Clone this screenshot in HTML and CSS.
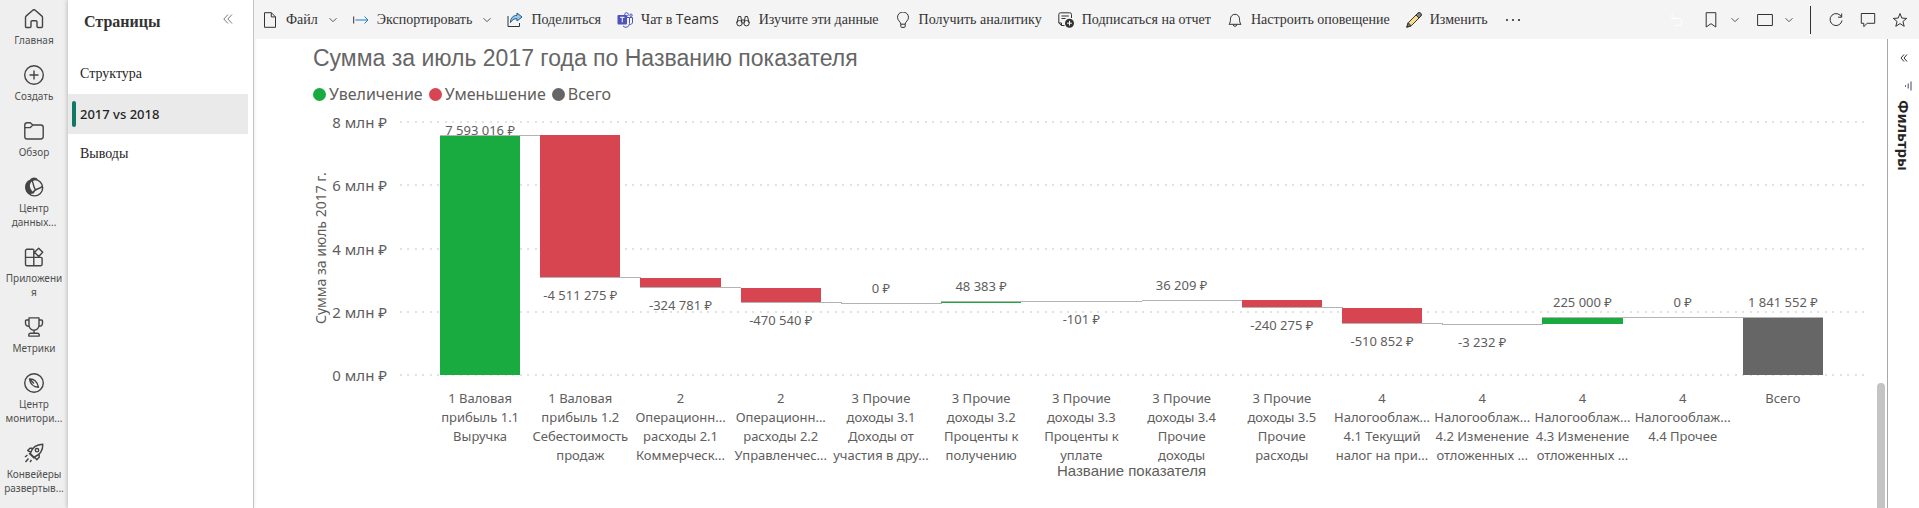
FILE: index.html
```html
<!DOCTYPE html>
<html lang="ru">
<head>
<meta charset="utf-8">
<title>Сумма за июль 2017 года</title>
<link rel="stylesheet" href="styles.css">
</head>
<body class="app">
<nav class="rail" aria-label="Навигация">
  <a class="rail-item" href="#"><svg class="rail-icon" viewBox="0 0 20 20"><path d="M1.5 8.6c0-.7.3-1.300.8-1.700L8.800 1.200a1.800 1.800 0 0 1 2.400 0l6.500 5.700c.5.4.8 1 .8 1.700v8.900a1 1 0 0 1-1 1h-3.500a1 1 0 0 1-1-1V13a1.200 1.200 0 0 0-1.200-1.200H8.200A1.200 1.200 0 0 0 7 13v4.500a1 1 0 0 1-1 1H2.500a1 1 0 0 1-1-1z"/></svg><span class="rail-label">Главная</span></a>
  <a class="rail-item" href="#"><svg class="rail-icon" viewBox="0 0 20 20"><circle cx="10" cy="10" r="9.300"/><path d="M10 5.500v9M5.500 10h9"/></svg><span class="rail-label">Создать</span></a>
  <a class="rail-item" href="#"><svg class="rail-icon" viewBox="0 0 20 20"><path d="M.8 4A2.300 2.300 0 0 1 3.100 1.800h3.200L8.800 4h8.100A2.300 2.300 0 0 1 19.200 6.300v9.400A2.300 2.300 0 0 1 16.900 18H3.100A2.300 2.300 0 0 1 .8 15.700zM.8 6.600h5.500L8.800 4"/></svg><span class="rail-label">Обзор</span></a>
  <a class="rail-item" href="#"><svg class="rail-icon" viewBox="0 0 20 20"><circle cx="10.500" cy="10.700" r="8.200"/><path class="solid" d="M2.800 15.500C-.5 10.500 1 4.500 6 2.800 8-.3 12.500-.2 14 2.800 11.500 2.600 9.500 3.200 8.200 4.300 6.500 5.500 5.500 7.800 6 10c.5 2.500 2.200 4.300 4.500 6-3.500 1.500-6 1.500-7.700-.5z"/><path d="M8 3.500c1.500 2.500 1 5.500 3.500 9.500M18.500 9c-3 4-7.500 1.500-9.500 7"/></svg><span class="rail-label">Центр<br>данных...</span></a>
  <a class="rail-item" href="#"><svg class="rail-icon" viewBox="0 0 20 20"><path d="M9.500 2.200H3A1.500 1.500 0 0 0 1.500 3.700v13.600A1.500 1.500 0 0 0 3 18.800h13.600a1.500 1.500 0 0 0 1.500-1.500v-5.800a1.100 1.100 0 0 0-1.100-1.100H1.500M9.800 2.200v16.600M14.700 1.300l4 4-4 4.200-4.200-4.200z"/></svg><span class="rail-label">Приложени<br>я</span></a>
  <a class="rail-item" href="#"><svg class="rail-icon" viewBox="0 0 20 20"><path d="M5 .9h10v7.300a5 5 0 0 1-10 0zM5 3H2.500a1 1 0 0 0-1 1v2A3.500 3.500 0 0 0 5 9.400M15 3h2.500a1 1 0 0 1 1 1v2A3.500 3.500 0 0 1 15 9.400M10 13.200v3M4.800 19.100v-1.300a1.600 1.600 0 0 1 1.600-1.600h7.200a1.600 1.600 0 0 1 1.600 1.600v1.300z"/></svg><span class="rail-label">Метрики</span></a>
  <a class="rail-item" href="#"><svg class="rail-icon" viewBox="0 0 20 20"><circle cx="10" cy="10" r="9.300"/><path d="M5.500 6c4-.5 8 2.500 9 8.300-5-.3-8.300-3.800-9-8.300zM5.500 6l4.500 4.500"/></svg><span class="rail-label">Центр<br>монитори...</span></a>
  <a class="rail-item" href="#"><svg class="rail-icon" viewBox="0 0 20 20"><path d="M6.300 10.500C8 5 12 1.500 18.800 1.300 19 7.500 15.500 12 10 14.200zM8.500 5.200H6L3.700 7.600l3 1.500M15.200 11.500v2.800l-2.400 2.500-2-2.700M5 10.200l5.500 5.300M1 14l2.500-2M1.500 19l3-3.500M6 19l1.500-2"/><circle cx="13" cy="7.200" r="1.700"/></svg><span class="rail-label">Конвейеры<br>развертыв...</span></a>
</nav>

<aside class="pages">
  <header class="pages-head">
    <h2 class="pages-title">Страницы</h2>
    <button class="plain" aria-label="Свернуть"><svg class="collapse" viewBox="0 0 10 10"><path d="M5 .5.800 5 5 9.500M9 .5 4.800 5 9 9.500"/></svg></button>
  </header>
  <a class="page-link" href="#">Структура</a>
  <a class="page-link active" href="#">2017 vs 2018</a>
  <a class="page-link" href="#">Выводы</a>
</aside>

<main class="main">
  <div class="toolbar">
    <button class="tool"><svg class="icon" viewBox="0 0 16 16"><path d="M2.500.7h6.800l4.200 4.200v10.400h-11zM9.300.7v4.200h4.200"/></svg>Файл<svg class="chevron" viewBox="0 0 8 8"><path d="m.5 2.200 3.500 3.500 3.500-3.500"/></svg></button>
    <button class="tool"><svg class="icon" viewBox="0 0 16 16"><path d="M.7 4.500v7"/><path class="blue" d="M2.500 8h12.500M11.500 4.500 15 8l-3.500 3.500"/></svg>Экспортировать<svg class="chevron" viewBox="0 0 8 8"><path d="m.5 2.200 3.500 3.500 3.500-3.500"/></svg></button>
    <button class="tool"><svg class="icon" viewBox="0 0 16 16"><path d="M1 4v10.500h11.500V11"/><path d="M10 1l5 4-5 4V6.700C7 6.500 5 8 3.500 10.500 3.500 6 6 3.500 10 3.300z" fill="#8ec9f5" stroke="#24567e"/></svg>Поделиться</button>
    <button class="tool"><svg class="icon" viewBox="0 0 16 16"><circle cx="9.500" cy="2.500" r="1.800" stroke="#4b53bc"/><circle cx="14" cy="3.200" r="1.200" stroke="#4b53bc"/><path d="M8 5.500h4.500v6a3.700 3.700 0 0 1-6.500 2.500M12.500 5.500h3v4.500a2.500 2.500 0 0 1-3 2.500" stroke="#4b53bc"/><rect x=".5" y="3" width="9.500" height="9.500" rx="1" fill="#4b53bc" stroke="none"/><path d="M3 5.300h4.500M5.250 5.300v5" stroke="#fff"/></svg><span>Чат в <span class="latin">Teams</span></span></button>
    <button class="tool"><svg class="icon" viewBox="0 0 16 16"><circle cx="4.500" cy="11.200" r="2.700"/><circle cx="11.500" cy="11.200" r="2.700"/><path d="M1.800 11 3.500 4.500h2.300l1.200 7M14.200 11l-1.700-6.500h-2.300L9 11.500M7 8h2"/></svg>Изучите эти данные</button>
    <button class="tool"><svg class="icon" viewBox="0 0 16 16"><path d="M5.800 12.200c0-2.500-3.300-3.500-3.300-6.900a5.500 5.300 0 0 1 11 0c0 3.400-3.300 4.400-3.300 6.900zM5.800 12.200v2.200a1 1 0 0 0 1 1h2.400a1 1 0 0 0 1-1v-2.200"/></svg>Получить аналитику</button>
    <button class="tool"><svg class="icon" viewBox="0 0 16 16"><path d="M6.500 13.500h-3L.8 11V2.500A1.700 1.700 0 0 1 2.500.8h9.300a1.700 1.700 0 0 1 1.700 1.700V6M.8 11h2.700v2.500M3.500 4h7.300M3.500 6.500h4"/><circle cx="11.500" cy="11.200" r="4.500" fill="#333" stroke="none"/><path d="M11.500 8.800v4.800M9.100 11.200h4.800" stroke="#fff"/></svg>Подписаться на отчет</button>
    <button class="tool"><svg class="icon" viewBox="0 0 16 16"><path d="M2 12.300h12c-1.200-1.500-1.500-3-1.500-5.500a4.500 4.500 0 0 0-9 0c0 2.500-.3 4-1.500 5.500zM6.200 12.500a1.800 1.800 0 0 0 3.600 0"/></svg>Настроить оповещение</button>
    <button class="tool"><svg class="icon" viewBox="0 0 16 16"><path d="M.8 15.200 2.200 10.800 11.700 1.300a2.100 2.100 0 0 1 3 3L5.200 13.800z" fill="#f7dc8c"/><path d="M10 3l3 3 1.700-1.700a2.100 2.100 0 0 0-3-3z" fill="#8a8080"/><path d="M2.200 10.800l3 3-4.400 1.400z" fill="#777"/></svg>Изменить</button>
    <button class="tool" aria-label="Ещё"><svg class="icon" viewBox="0 0 16 16"><g fill="#333" stroke="none"><circle cx="3" cy="8" r="1.100"/><circle cx="9" cy="8" r="1.100"/><circle cx="15" cy="8" r="1.100"/></g></svg></button>
    <span class="spacer"></span>
    <div class="tools-right">
      <button class="tool faint" aria-label="Сброс" disabled><svg class="icon" viewBox="0 0 16 16"><path d="M3 2v4.500h4.500M3.300 6.300h6.200a3.500 3.500 0 0 1 0 7.200H6"/></svg></button>
      <button class="tool" aria-label="Закладки"><svg class="icon" viewBox="0 0 16 16"><path d="M3.200.7h9.600v14.300L8 11.700 3.200 15z"/></svg><svg class="chevron" viewBox="0 0 8 8"><path d="m.5 2.200 3.500 3.500 3.500-3.500"/></svg></button>
      <button class="tool" aria-label="Вид"><svg class="icon" viewBox="0 0 16 16"><path d="M.6 2.500h14.800v11H.6z"/></svg><svg class="chevron" viewBox="0 0 8 8"><path d="m.5 2.200 3.500 3.500 3.500-3.500"/></svg></button>
    </div>
    <div class="tools-end">
      <button class="tool" aria-label="Обновить"><svg class="icon" viewBox="0 0 16 16"><path d="M13.500 5A6 6 0 1 0 14 8.500M13.700 1.500v3.700H10"/></svg></button>
      <button class="tool" aria-label="Комментарии"><svg class="icon" viewBox="0 0 16 16"><path d="M1.300 1.500h13.400v9.800H7.200L3.800 14.600v-3.300H1.300z"/></svg></button>
      <button class="tool" aria-label="В избранное"><svg class="icon" viewBox="0 0 16 16"><path d="m8 1.500 1.800 4.600 4.900.3-3.800 3.100 1.300 4.800L8 11.600l-4.200 2.700 1.300-4.800-3.800-3.100 4.900-.3z"/></svg></button>
    </div>
  </div>

  <div class="work">
    <section class="visual">
      <h1 class="visual-title">Сумма за июль 2017 года по Названию показателя</h1>
      <ul class="legend">
        <li class="legend-item up">Увеличение</li>
        <li class="legend-item down">Уменьшение</li>
        <li class="legend-item total">Всего</li>
      </ul>
      <div class="chart">
        <div class="y-title">Сумма за июль 2017 г.</div>
        <div class="ticks"><span>8 млн ₽</span><span>6 млн ₽</span><span>4 млн ₽</span><span>2 млн ₽</span><span>0 млн ₽</span></div>
        <div class="plot">
          <div class="gridlines"><i></i><i></i><i></i><i></i><i></i></div>
          <div class="columns bars">
            <div class="col"><div class="bar up clamp" style="margin-top:12.9px;height:94.91%"><span>7 593 016 ₽</span></div></div>
            <div class="col"><div class="bar down" style="margin-top:12.9px;height:56.39%"><span>-4 511 275 ₽</span></div></div>
            <div class="col"><div class="bar down" style="margin-top:155.5px;height:4.06%"><span>-324 781 ₽</span></div></div>
            <div class="col"><div class="bar down" style="margin-top:165.8px;height:5.88%"><span>-470 540 ₽</span></div></div>
            <div class="col"><div class="bar up" style="margin-top:180.7px;height:0"><span>0 ₽</span></div></div>
            <div class="col"><div class="bar up" style="margin-top:179.2px;height:0.61%"><span>48 383 ₽</span></div></div>
            <div class="col"><div class="bar down" style="margin-top:179.2px;height:0"><span>-101 ₽</span></div></div>
            <div class="col"><div class="bar up" style="margin-top:178px;height:0.45%"><span>36 209 ₽</span></div></div>
            <div class="col"><div class="bar down" style="margin-top:178px;height:3%"><span>-240 275 ₽</span></div></div>
            <div class="col"><div class="bar down" style="margin-top:185.6px;height:6.39%"><span>-510 852 ₽</span></div></div>
            <div class="col"><div class="bar down" style="margin-top:201.8px;height:0.04%"><span>-3 232 ₽</span></div></div>
            <div class="col"><div class="bar up" style="margin-top:194.8px;height:2.81%"><span>225 000 ₽</span></div></div>
            <div class="col"><div class="bar up" style="margin-top:194.8px;height:0"><span>0 ₽</span></div></div>
            <div class="col"><div class="bar total" style="margin-top:194.8px;height:23.02%"><span>1 841 552 ₽</span></div></div>
          </div>
        </div>
        <div class="x-axis">
          <div class="columns labels">
            <div>1 Валовая<br>прибыль 1.1<br>Выручка</div>
            <div>1 Валовая<br>прибыль 1.2<br>Себестоимость<br>продаж</div>
            <div>2<br>Операционн...<br>расходы 2.1<br>Коммерческ...</div>
            <div>2<br>Операционн...<br>расходы 2.2<br>Управленчес...</div>
            <div>3 Прочие<br>доходы 3.1<br>Доходы от<br>участия в дру...</div>
            <div>3 Прочие<br>доходы 3.2<br>Проценты к<br>получению</div>
            <div>3 Прочие<br>доходы 3.3<br>Проценты к<br>уплате</div>
            <div>3 Прочие<br>доходы 3.4<br>Прочие<br>доходы</div>
            <div>3 Прочие<br>доходы 3.5<br>Прочие<br>расходы</div>
            <div>4<br>Налогооблаж...<br>4.1 Текущий<br>налог на при...</div>
            <div>4<br>Налогооблаж...<br>4.2 Изменение<br>отложенных ...</div>
            <div>4<br>Налогооблаж...<br>4.3 Изменение<br>отложенных ...</div>
            <div>4<br>Налогооблаж...<br>4.4 Прочее</div>
            <div>Всего</div>
          </div>
          <div class="x-title">Название показателя</div>
        </div>
      </div>
    </section>
    <div class="scroll"><div class="thumb"></div></div>
    <aside class="filters">
      <button class="plain" aria-label="Развернуть"><svg class="expand" viewBox="0 0 8 8"><path d="M4 .5 1 4l3 3.500M7 .5 4 4l3 3.500"/></svg></button>
      <svg class="filter-icon" viewBox="0 0 8 10"><path d="M7 .5v9M4.200 2.500v5M1.500 4.200v1.600"/></svg>
      <h2 class="filters-title">Фильтры</h2>
    </aside>
  </div>
</main>
</body>
</html>
```

FILE: styles.css
```css
* { box-sizing: border-box; }

.app {
  margin: 0;
  min-height: 100vh;
  display: flex;
  background: #fff;
  color: #333;
  font-family: "Noto Sans", "Open Sans", sans-serif;
}

svg { display: block; flex: none; fill: none; stroke: #333; }

.plain { padding: 0; border: 0; background: none; }

/* Left navigation rail */
.rail {
  flex: none;
  width: 68px;
  padding-top: 9px;
  display: flex;
  flex-direction: column;
  gap: 17px;
  background: #efefef;
}
.rail-item {
  display: flex;
  flex-direction: column;
  align-items: center;
  gap: 4px;
  padding-bottom: 1px;
  color: #505050;
  text-decoration: none;
}
.rail-icon { width: 20px; height: 20px; stroke: #444; stroke-width: 1.4; stroke-linejoin: round; }
.rail-icon .solid { fill: #444; stroke: none; }
.rail-label { font-size: 10px; line-height: 14px; text-align: center; white-space: nowrap; }

/* Report pages */
.pages {
  flex: none;
  width: 186px;
  padding-right: 5px;
  border-right: 1px solid #c4c4c4;
  box-shadow: -1px 0 4px rgba(0, 0, 0, .2);
}
.pages-head {
  height: 54px;
  padding: 12px 15px 0 16px;
  display: flex;
  justify-content: space-between;
  align-items: flex-start;
}
.pages-title { margin: 0; font: bold 16px/20px "Liberation Serif", serif; }
.collapse { width: 10px; height: 10px; margin-top: 2px; stroke: #777; }
.page-link {
  height: 40px;
  padding-left: 4px;
  display: flex;
  align-items: center;
  gap: 4px;
  color: #252423;
  font: 14px/20px "Liberation Serif", serif;
  text-decoration: none;
}
.page-link::before { content: ""; width: 4px; height: 26px; border-radius: 2px; }
.page-link.active { background: #eaeaea; font: 500 13px/20px "Noto Sans", sans-serif; }
.page-link.active::before { background: #117865; }

/* Toolbar */
.main { flex: 1; min-width: 0; display: flex; flex-direction: column; }
.toolbar { height: 39px; display: flex; align-items: center; background: #f4f4f4; }
.tool {
  padding: 0 8px;
  display: flex;
  align-items: center;
  gap: 8px;
  border: 0;
  background: none;
  color: #333;
  font: 14px/20px "Liberation Serif", serif;
  white-space: nowrap;
}
.latin { font: 14px/20px "Open Sans", sans-serif; }
.icon { width: 16px; height: 16px; }
.icon .blue { stroke: #1a7fc4; }
.chevron { width: 8px; height: 8px; margin-left: 3px; stroke: #555; }
.faint svg { stroke: #fff; }
.spacer { flex: 1; }
.tools-right { display: flex; gap: 2px; padding-right: 9px; }
.tools-right .tool { gap: 9px; }
.tools-end { height: 28px; display: flex; padding: 0 3px 0 9px; border-left: 1px solid #333; }

/* Report visual */
.work { flex: 1; display: flex; }
.visual { flex: 1; min-width: 0; padding: 7px 10px 16px 59px; color: #605e5c; }
.visual-title { margin: 0; font: 23px/24px "Liberation Sans", sans-serif; color: #666; }
.legend {
  margin: 12px 0 16px;
  padding: 0;
  display: flex;
  gap: 6px;
  list-style: none;
  font-size: 16px;
  line-height: 24px;
}
.legend-item { display: flex; align-items: center; gap: 3px; }
.legend-item::before { content: ""; width: 13px; height: 13px; border-radius: 50%; background: var(--tone); }
.up { --tone: #1aab40; }
.down { --tone: #d64550; }
.total { --tone: #666; }

.chart { display: grid; grid-template-columns: 16px 59px 1fr; column-gap: 6px; }
.y-title {
  writing-mode: vertical-rl;
  transform: rotate(180deg);
  text-align: center;
  font-size: 14px;
  line-height: 16px;
}
.ticks {
  margin: -10px 0;
  padding-right: 7px;
  display: flex;
  flex-direction: column;
  justify-content: space-between;
  align-items: flex-end;
  font-size: 15px;
  line-height: 20px;
  white-space: nowrap;
}
.plot { position: relative; height: 253px; }
.gridlines {
  position: absolute;
  inset: -1px 0;
  display: flex;
  flex-direction: column;
  justify-content: space-between;
}
.gridlines i {
  height: 2px;
  background: linear-gradient(to right, #e2e2e2 2px, transparent 2px 7px, #e2e2e2 7px 9px, transparent 9px) 0 0 / 15px 2px;
}
.columns { padding: 0 34px 0 30px; display: grid; grid-template-columns: repeat(14, 1fr); }
.bars { position: relative; height: 100%; }
.col { height: 253px; padding: 0 10%; }
.bar {
  position: relative;
  min-height: 1px;
  background: var(--tone);
  border-top: 1px solid #b3b3b3;
}
.bar.down { border-top-width: 0; border-bottom: 1px solid #b3b3b3; }
.bar::after {
  content: "";
  position: absolute;
  left: 100%;
  top: -1px;
  width: 26%;
  height: 1px;
  background: #b3b3b3;
}
.bar.down::after { top: auto; bottom: -1px; }
.bar.total::after { content: none; }
.bar span {
  position: absolute;
  left: 50%;
  bottom: 100%;
  margin-bottom: 7px;
  transform: translateX(-50%);
  font-size: 13px;
  line-height: 18px;
  white-space: nowrap;
}
.bar.clamp span { margin-bottom: -3px; }
.bar.down span { bottom: auto; top: 100%; margin: 9px 0 0; }

.x-axis { grid-column: 3; padding-top: 14px; }
.labels { text-align: center; font-size: 13px; line-height: 19px; white-space: nowrap; }
.x-title { padding-right: 4px; text-align: center; font: 15px/12px "Liberation Sans", sans-serif; }

.scroll { width: 10px; padding: 344px 2px 0 0; display: flex; }
.thumb { flex: 1; border-radius: 4px 4px 0 0; background: #c4c4c4; }

/* Collapsed filter pane */
.filters {
  width: 32px;
  padding-top: 15px;
  display: flex;
  flex-direction: column;
  align-items: center;
  border-left: 1px solid #a8a8a8;
}
.expand { width: 8px; height: 8px; }
.filter-icon { width: 8px; height: 10px; margin: 19px 0 9px 8px; stroke: #446; }
.filters-title { margin: 0; writing-mode: vertical-rl; font-size: 15px; line-height: 20px; color: #252423; }
```
